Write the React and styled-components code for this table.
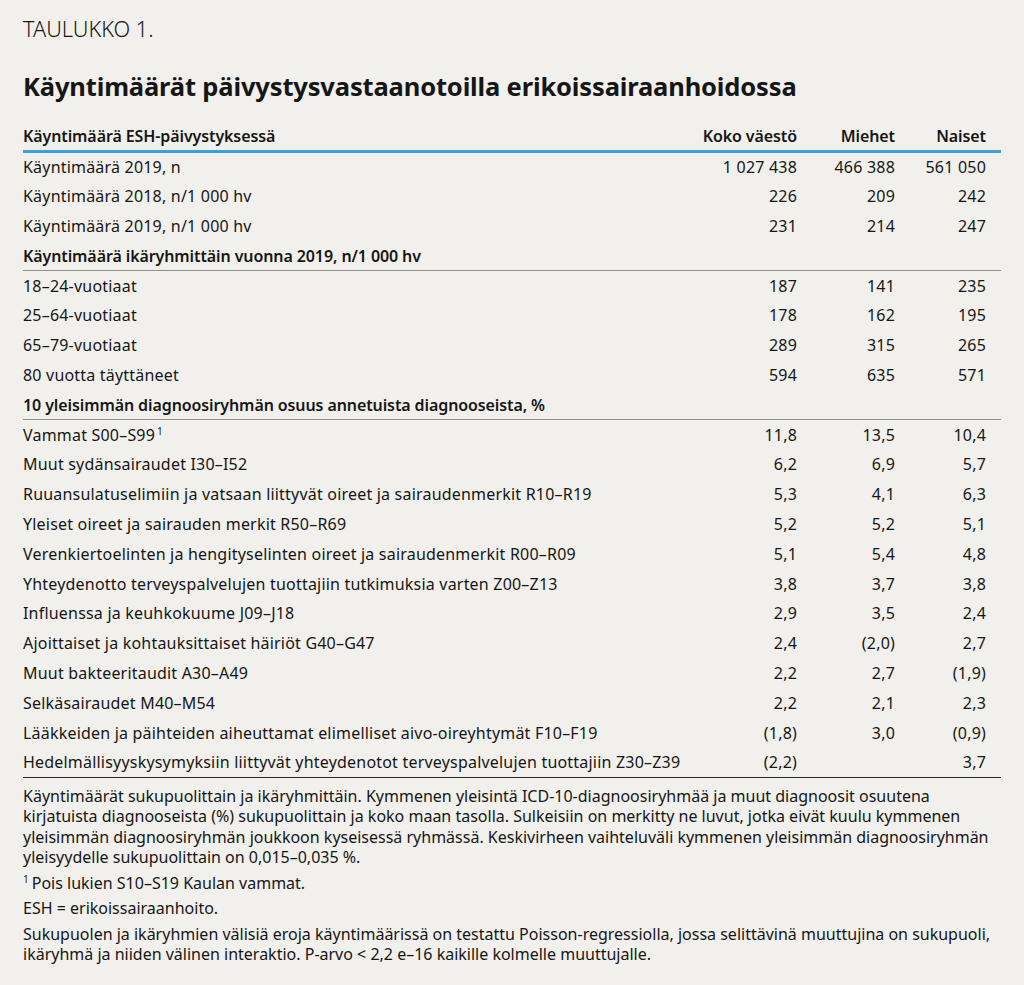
import styled, { createGlobalStyle } from "styled-components";

const GlobalStyle = createGlobalStyle`
  html, body {
    margin: 0;
    background: #f1f0ec;
  }
  body {
    font-family: "Noto Sans", "Liberation Sans", sans-serif;
    color: #161616;
  }
`;

const Page = styled.div`
  padding: 14px 23px 20px 23px;
  width: 978px;
`;

const Label = styled.div`
  font-size: 21.7px;
  font-weight: 300;
  line-height: 30px;
`;

const Title = styled.h1`
  margin: 26px 0 20px 0;
  font-size: 25.5px;
  font-weight: 700;
  letter-spacing: -0.15px;
  line-height: 32px;
`;

const Table = styled.table`
  width: 100%;
  border-collapse: collapse;
  font-size: 16px;
  letter-spacing: 0.2px;
`;

const HeadCell = styled.th`
  text-align: ${(p) => (p.$num ? "right" : "left")};
  font-weight: 600;
  height: 28px;
  padding: 0 ${(p) => (p.$last ? "15px" : "0")} 0 0;
  border-bottom: 3px solid #3b9fde;
  width: ${(p) => p.$w || "auto"};
  vertical-align: middle;
  letter-spacing: -0.1px;
`;

const Row = styled.tr`
  height: 29.8px;
  border-bottom: ${(p) => (p.$section ? "1px solid #8e8e8c" : "none")};
  &:last-child {
    border-bottom: 1px solid #2a2a2a;
  }
`;

const Cell = styled.td`
  text-align: ${(p) => (p.$num ? "right" : "left")};
  font-weight: ${(p) => (p.$bold ? 600 : 400)};
  letter-spacing: ${(p) => (p.$bold ? "-0.1px" : "0.2px")};
  padding: 0 ${(p) => (p.$last ? "15px" : "0")} 0 0;
  vertical-align: middle;
  white-space: nowrap;
`;

const Sup = styled.sup`
  font-size: 10px;
  vertical-align: 6px;
  line-height: 0;
  margin: 0 3px 0 2px;
`;

const NoteSup = styled(Sup)`
  margin: 0 3px 0 0;
`;

const Notes = styled.div`
  margin-top: 8px;
  font-size: 16px;
  letter-spacing: 0;
  line-height: 20.5px;
  display: flex;
  flex-direction: column;
  gap: 5px;
`;

const Note = styled.p`
  margin: 0;
  white-space: nowrap;
`;

const rows = [
  { label: "Käyntimäärä 2019, n", v: ["1 027 438", "466 388", "561 050"] },
  { label: "Käyntimäärä 2018, n/1 000 hv", v: ["226", "209", "242"] },
  { label: "Käyntimäärä 2019, n/1 000 hv", v: ["231", "214", "247"] },
  { label: "Käyntimäärä ikäryhmittäin vuonna 2019, n/1 000 hv", section: true },
  { label: "18–24-vuotiaat", v: ["187", "141", "235"] },
  { label: "25–64-vuotiaat", v: ["178", "162", "195"] },
  { label: "65–79-vuotiaat", v: ["289", "315", "265"] },
  { label: "80 vuotta täyttäneet", v: ["594", "635", "571"] },
  { label: "10 yleisimmän diagnoosiryhmän osuus annetuista diagnooseista, %", section: true },
  { label: "Vammat S00–S99", sup: "1", v: ["11,8", "13,5", "10,4"] },
  { label: "Muut sydänsairaudet I30–I52", v: ["6,2", "6,9", "5,7"] },
  { label: "Ruuansulatuselimiin ja vatsaan liittyvät oireet ja sairaudenmerkit R10–R19", v: ["5,3", "4,1", "6,3"] },
  { label: "Yleiset oireet ja sairauden merkit R50–R69", v: ["5,2", "5,2", "5,1"] },
  { label: "Verenkiertoelinten ja hengityselinten oireet ja sairaudenmerkit R00–R09", v: ["5,1", "5,4", "4,8"] },
  { label: "Yhteydenotto terveyspalvelujen tuottajiin tutkimuksia varten Z00–Z13", v: ["3,8", "3,7", "3,8"] },
  { label: "Influenssa ja keuhkokuume J09–J18", v: ["2,9", "3,5", "2,4"] },
  { label: "Ajoittaiset ja kohtauksittaiset häiriöt G40–G47", v: ["2,4", "(2,0)", "2,7"] },
  { label: "Muut bakteeritaudit A30–A49", v: ["2,2", "2,7", "(1,9)"] },
  { label: "Selkäsairaudet M40–M54", v: ["2,2", "2,1", "2,3"] },
  { label: "Lääkkeiden ja päihteiden aiheuttamat elimelliset aivo-oireyhtymät F10–F19", v: ["(1,8)", "3,0", "(0,9)"] },
  { label: "Hedelmällisyyskysymyksiin liittyvät yhteydenotot terveyspalvelujen tuottajiin Z30–Z39", v: ["(2,2)", "", "3,7"] },
];

export default function App() {
  return (
    <>
      <GlobalStyle />
      <Page>
        <Label>TAULUKKO 1.</Label>
        <Title>Käyntimäärät päivystysvastaanotoilla erikoissairaanhoidossa</Title>
        <Table>
          <thead>
            <tr>
              <HeadCell>Käyntimäärä ESH-päivystyksessä</HeadCell>
              <HeadCell $num $w="110px">Koko väestö</HeadCell>
              <HeadCell $num $w="98px">Miehet</HeadCell>
              <HeadCell $num $last $w="91px">Naiset</HeadCell>
            </tr>
          </thead>
          <tbody>
            {rows.map((r, i) =>
              r.section ? (
                <Row key={i} $section>
                  <Cell $bold colSpan={4}>{r.label}</Cell>
                </Row>
              ) : (
                <Row key={i}>
                  <Cell>
                    {r.label}
                    {r.sup && <Sup>{r.sup}</Sup>}
                  </Cell>
                  <Cell $num>{r.v[0]}</Cell>
                  <Cell $num>{r.v[1]}</Cell>
                  <Cell $num $last>{r.v[2]}</Cell>
                </Row>
              )
            )}
          </tbody>
        </Table>
        <Notes>
          <Note>
            Käyntimäärät sukupuolittain ja ikäryhmittäin. Kymmenen yleisintä ICD-10-diagnoosiryhmää ja muut diagnoosit osuutena
            <br />
            kirjatuista diagnooseista (%) sukupuolittain ja koko maan tasolla. Sulkeisiin on merkitty ne luvut, jotka eivät kuulu kymmenen
            <br />
            yleisimmän diagnoosiryhmän joukkoon kyseisessä ryhmässä. Keskivirheen vaihteluväli kymmenen yleisimmän diagnoosiryhmän
            <br />
            yleisyydelle sukupuolittain on 0,015–0,035 %.
          </Note>
          <Note>
            <NoteSup>1</NoteSup>Pois lukien S10–S19 Kaulan vammat.
          </Note>
          <Note>ESH = erikoissairaanhoito.</Note>
          <Note>
            Sukupuolen ja ikäryhmien välisiä eroja käyntimäärissä on testattu Poisson-regressiolla, jossa selittävinä muuttujina on sukupuoli,
            <br />
            ikäryhmä ja niiden välinen interaktio. P-arvo &lt; 2,2 e–16 kaikille kolmelle muuttujalle.
          </Note>
        </Notes>
      </Page>
    </>
  );
}
